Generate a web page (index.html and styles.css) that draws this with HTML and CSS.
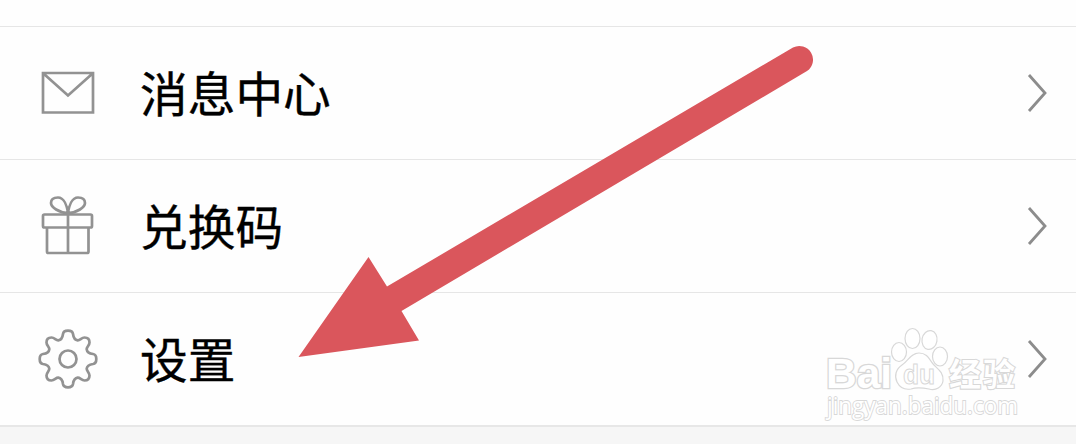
FILE: index.html
```html
<!DOCTYPE html>
<html lang="zh-CN">
<head>
    <meta charset="UTF-8">
    <meta name="viewport" content="width=device-width, initial-scale=1.0">
    <title>设置</title>
    <link rel="stylesheet" href="styles.css">
</head>
<body>
    <div class="menu">
        <div class="menu-item">
            <svg class="icon" viewBox="0 0 60 60">
                <path d="M5 10H55V49.500H5Z M6 11L30 32.500L54 11"/>
            </svg>
            <span class="label">消息中心</span>
            <svg class="chevron" viewBox="0 0 20 40"><path d="M2 2L18 20L2 38"/></svg>
        </div>
        <div class="menu-item">
            <svg class="icon" viewBox="0 -2 60 60">
                <rect x="5" y="16.500" width="49" height="13" rx="1.500"/>
                <path d="M9 29.500V53.500Q9 55 10.500 55H49Q50.500 55 50.500 53.500V29.500 M30 16V55"/>
                <path d="M30 15C21 15 13 9 13 5C13 1 16-.5 20-.5C26-.5 29 8 30 15C31 8 34-.5 40-.5C44-.5 47 1 47 5C47 9 39 15 30 15Z"/>
            </svg>
            <span class="label">兑换码</span>
            <svg class="chevron" viewBox="0 0 20 40"><path d="M2 2L18 20L2 38"/></svg>
        </div>
        <div class="menu-item">
            <svg class="icon" viewBox="-30 -30 60 60">
                <!-- one quarter of the gear, repeated around the centre -->
                <path id="gear" d="M0-28.300C-3-28.300-4.600-27.500-5-25C-5.600-20.500-7-19-9.700-18.700C-12-18.500-13.500-21.500-16.500-21.500C-20-21.500-21.500-20-21.500-16.500C-21.500-13.500-18.500-12-18.700-9.700C-19-7-20.500-5.600-25-5C-27.500-4.600-28.300-3-28.300 0"/>
                <use href="#gear" transform="rotate(90)"/>
                <use href="#gear" transform="rotate(180)"/>
                <use href="#gear" transform="rotate(270)"/>
                <circle r="8.500"/>
            </svg>
            <span class="label">设置</span>
            <svg class="chevron" viewBox="0 0 20 40"><path d="M2 2L18 20L2 38"/></svg>
        </div>
    </div>

    <svg class="watermark" viewBox="0 0 210 100">
        <text class="brand" x="7" y="72.500" textLength="66" lengthAdjust="spacingAndGlyphs">Bai</text>
        <ellipse cx="80" cy="37" rx="7.500" ry="9.500"/>
        <ellipse cx="93.500" cy="23.500" rx="7.500" ry="10"/>
        <ellipse cx="110.500" cy="25" rx="7.500" ry="9.500" transform="rotate(10 110.500 25)"/>
        <ellipse cx="121" cy="41.500" rx="7.500" ry="9.500"/>
        <path d="M100 38C92 38 89 46 83 50C77 54 75 61 78 67C81 73 86 75 92 74C98 72 105 73 110 74C117 76 123 72 124 66C125 58 119 54 115 50C111 46 109 38 100 38Z"/>
        <text class="du" x="84" y="69" textLength="32" lengthAdjust="spacingAndGlyphs">du</text>
        <text class="brand-cn" x="130" y="70.500" textLength="66">经验</text>
        <text class="site" x="8" y="99" textLength="191" lengthAdjust="spacingAndGlyphs">jingyan.baidu.com</text>
    </svg>

    <svg class="arrow" viewBox="0 0 1076 444">
        <path d="M298.500 357L368.500 257L387 286.500L793 47.500A13.700 13.700 0 0 1 807 71L401.500 311L419 340.500Z"/>
    </svg>
</body>
</html>
```
FILE: styles.css
```css
body {
    margin: 0;
    padding-top: 26px;
    height: 444px;
    box-sizing: border-box;
    position: relative;
    overflow: hidden;
    background: #f6f6f6;
    font-family: "Noto Sans CJK SC", sans-serif;
    box-shadow: inset 0 26px #fefefe;
}

.menu {
    background: #fefefe;
    border-bottom: 2px solid #e7e7e7;
}

.menu-item {
    display: flex;
    align-items: center;
    height: 133px;
    box-sizing: border-box;
    padding: 0 29px 0 38px;
    border-top: 1px solid #e6e6e6;
}

.icon {
    width: 60px;
    height: 60px;
    overflow: visible;
    fill: none;
    stroke: #929292;
    stroke-width: 2.7;
}

.label {
    margin-left: 42px;
    padding-bottom: 3px;
    flex: 1;
    font-size: 47.7px;
    line-height: 70px;
    color: #000;
    -webkit-text-stroke: 0.4px #000;
}

.chevron {
    width: 20px;
    height: 40px;
    fill: none;
    stroke: #8c8c8c;
    stroke-width: 2.8;
}

.arrow {
    position: absolute;
    left: 0;
    top: 0;
    width: 1076px;
    height: 444px;
    fill: #da565c;
}

.watermark {
    position: absolute;
    left: 819px;
    top: 315px;
    width: 210px;
    height: 100px;
    overflow: visible;
    fill: #fff;
    stroke: #d8d8d8;
    stroke-width: 1.2;
}

.brand {
    font: bold 42px "Liberation Sans", sans-serif;
    paint-order: stroke;
    stroke-width: 2.6;
}

.du {
    font: bold 28px "Liberation Sans", sans-serif;
    stroke-width: 1;
}

.brand-cn {
    font: bold 32px "Noto Sans CJK SC", sans-serif;
    paint-order: stroke;
    stroke-width: 2.2;
}

.site {
    font: 23px "Open Sans", sans-serif;
    paint-order: stroke;
    stroke-width: 1.8;
}
```
